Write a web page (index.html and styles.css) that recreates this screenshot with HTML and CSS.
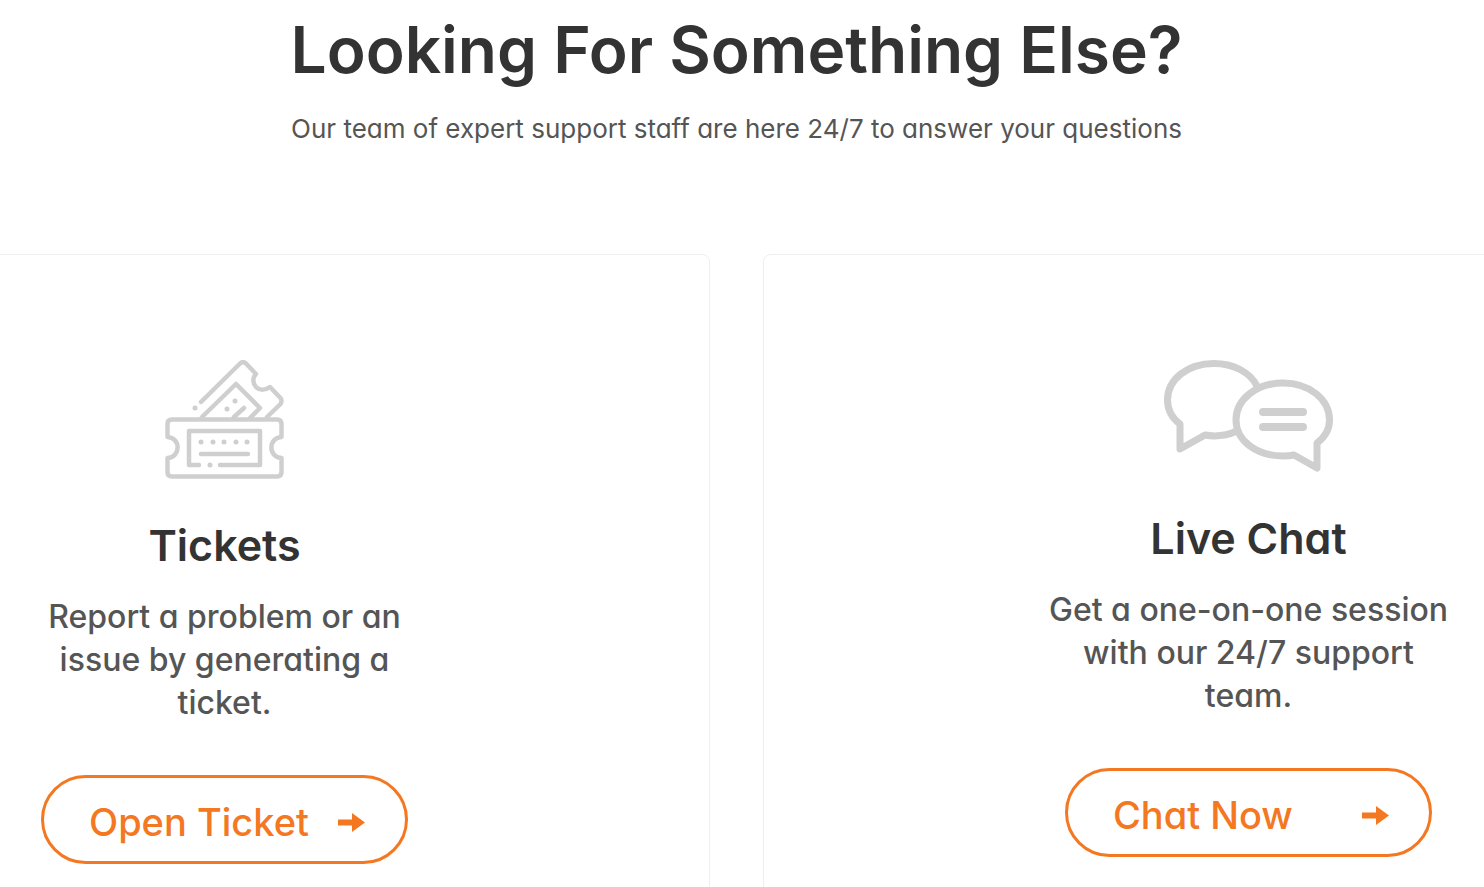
FILE: index.html
```html
<!DOCTYPE html>
<html lang="en">
<head>
    <meta charset="UTF-8">
    <meta name="viewport" content="width=device-width, initial-scale=1.0">
    <title>Support</title>
    <link rel="stylesheet" href="styles.css">
</head>
<body>
    <main class="page">
        <section class="support">
            <header class="support-header">
                <h1>Looking For Something Else?</h1>
                <p>Our team of expert support staff are here 24/7 to answer your questions</p>
            </header>

            <div class="cards">
                <article class="card">
                    <svg class="card-icon" width="119" height="119" viewBox="0 0 119 119" fill="none" stroke="#cfcfcf" stroke-width="4.5" stroke-linecap="round" stroke-linejoin="round" aria-hidden="true">
                        <!-- back ticket -->
                        <path d="M36 42L75 3.500Q78 1 81 3.500L91 14C87 18 88 24 91 27C95 31 101 30 105 27L115.500 38Q117.500 41 115.500 44L102 57"/>
                        <path d="M37 57L71 24L95 48L85 58M69 57L79 48"/>
                        <!-- front ticket -->
                        <path d="M7 59.500H112Q116.500 59.500 116.500 64V77C103 78 103 97 116.500 98V112Q116.500 116.500 112 116.500H7Q2.500 116.500 2.500 112V98C16 97 16 78 2.500 77V64Q2.500 59.500 7 59.500Z"/>
                        <path d="M34 105H24V71H95V105H55M36 94H83"/>
                        <g fill="#cfcfcf" stroke="none">
                            <circle cx="30" cy="48" r="2.500"/>
                            <circle cx="62" cy="49" r="2.500"/>
                            <circle cx="70" cy="41" r="2.500"/>
                            <circle cx="36" cy="82" r="2.500"/>
                            <circle cx="48" cy="82" r="2.500"/>
                            <circle cx="59" cy="82" r="2.500"/>
                            <circle cx="71" cy="82" r="2.500"/>
                            <circle cx="82" cy="82" r="2.500"/>
                            <circle cx="45" cy="105" r="2.500"/>
                        </g>
                    </svg>
                    <h2>Tickets</h2>
                    <p>Report a problem or an issue by generating a ticket.</p>
                    <a class="btn" href="#ticket">
                        Open Ticket
                        <svg class="arrow" width="28" height="20" viewBox="0 0 28 20" aria-hidden="true"><path d="M1 7.500H15V1L28 10.500L15 20V13.500H1Z" fill="#f47721"/></svg>
                    </a>
                </article>

                <article class="card">
                    <svg class="card-icon" width="169" height="112" viewBox="0 0 169 112" fill="none" stroke="#cfcfcf" stroke-width="7" stroke-linecap="round" stroke-linejoin="round" aria-hidden="true">
                        <path d="M93 26C86 12 69 3.500 50 3.500C24 3.500 3.500 19 3.500 40C3.500 50 8 58 16 64V89L41 75C52 77 64 75 73 71"/>
                        <path d="M153 83C161 77 165.500 69 165.500 60C165.500 39 145 23 119 23S72 39 72 60S93 96 119 96Q125 96 130 95L153 108Z"/>
                        <path d="M99 52H139M99 67H139" stroke-width="8"/>
                    </svg>
                    <h2>Live Chat</h2>
                    <p>Get a one-on-one session with our 24/7 support team.</p>
                    <a class="btn" href="#chat">
                        Chat Now
                        <svg class="arrow" width="28" height="20" viewBox="0 0 28 20" aria-hidden="true"><path d="M1 7.500H15V1L28 10.500L15 20V13.500H1Z" fill="#f47721"/></svg>
                    </a>
                </article>
            </div>
        </section>
    </main>
</body>
</html>
```
FILE: styles.css
```css
:root {
    --heading: #333333;
    --text: #555555;
    --accent: #f47721;
    --line: #eeeeee;
}

* {
    box-sizing: border-box;
    margin: 0;
    padding: 0;
}

body {
    font-family: Inter, "Open Sans", sans-serif;
    font-feature-settings: "cv11";
    background: #fff;
    color: var(--text);
}

.page {
    overflow: hidden;
    height: 100vh;
}

/* the card row runs past both edges of the window */
.support {
    margin: 0 -250px 0 -261px;
    padding-top: 12px;
}

.support-header {
    text-align: center;
    margin-bottom: 104px;
}

h1 {
    color: var(--heading);
    font-size: 64px;
    font-weight: 600;
    line-height: 76px;
    margin-bottom: 20px;
}

.support-header p {
    font-size: 26px;
    line-height: 42px;
}

.cards {
    display: grid;
    grid-template-columns: 1fr 1fr;
    gap: 53px;
}

.card {
    display: flex;
    flex-direction: column;
    align-items: center;
    padding: 105px 40px;
    border: 1px solid var(--line);
    border-radius: 8px;
    text-align: center;
}

.card-icon {
    margin-bottom: 40px;
}

h2 {
    color: var(--heading);
    font-size: 43px;
    font-weight: 600;
    line-height: 52px;
    margin-bottom: 24px;
}

.card p {
    max-width: 410px;
    font-size: 32px;
    font-weight: 500;
    line-height: 43px;
    margin-bottom: 51px;
}

.btn {
    display: flex;
    align-items: center;
    justify-content: space-between;
    width: 367px;
    height: 89px;
    padding: 4px 40px 0 45px;
    border: 3px solid var(--accent);
    border-radius: 45px;
    color: var(--accent);
    font-size: 38px;
    font-weight: 500;
    text-decoration: none;
}

.btn:hover {
    background: #fff6ef;
}
```
